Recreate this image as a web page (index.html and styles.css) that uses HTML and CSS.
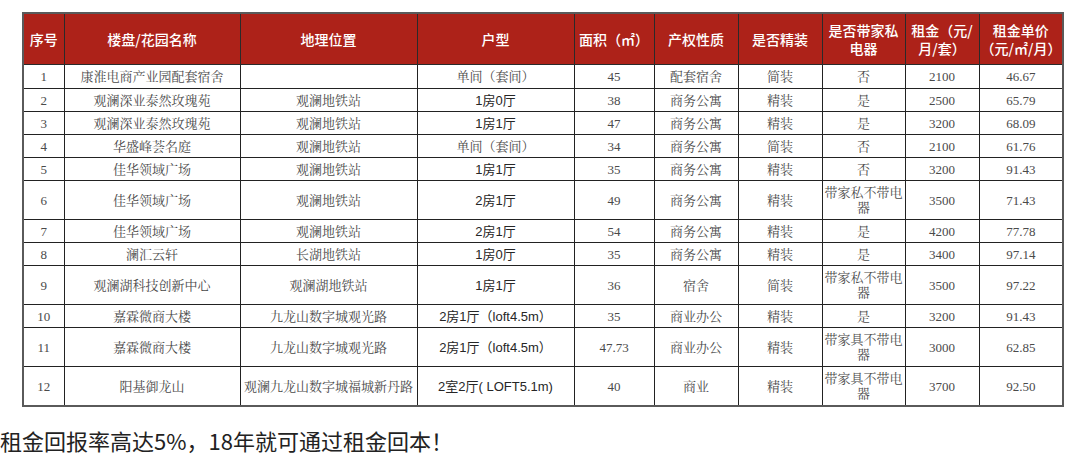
FILE: index.html
```html
<!DOCTYPE html>
<html lang="zh-CN">
<head>
<meta charset="utf-8">
<title>租金表</title>
<link rel="stylesheet" href="styles.css">
</head>
<body>
<div class="page">
  <table class="rent">
    <colgroup>
      <col class="c1"><col class="c2"><col class="c3"><col class="c4"><col class="c5">
      <col class="c6"><col class="c7"><col class="c8"><col class="c9"><col class="c10">
    </colgroup>
    <thead>
      <tr>
        <th>序号</th><th>楼盘/花园名称</th><th>地理位置</th><th>户型</th><th>面积（㎡）</th>
        <th>产权性质</th><th>是否精装</th><th>是否带家私<br>电器</th><th>租金（元/<br>月/套）</th><th>租金单价<br>（元/㎡/月）</th>
      </tr>
    </thead>
    <tbody>
      <tr class="r1"><td>1</td><td>康淮电商产业园配套宿舍</td><td></td><td>单间（套间）</td><td>45</td><td>配套宿舍</td><td>简装</td><td>否</td><td>2100</td><td>46.67</td></tr>
      <tr class="rs"><td>2</td><td>观澜深业泰然玫瑰苑</td><td>观澜地铁站</td><td class="sans">1房0厅</td><td>38</td><td>商务公寓</td><td>精装</td><td>是</td><td>2500</td><td>65.79</td></tr>
      <tr class="rs"><td>3</td><td>观澜深业泰然玫瑰苑</td><td>观澜地铁站</td><td class="sans">1房1厅</td><td>47</td><td>商务公寓</td><td>精装</td><td>是</td><td>3200</td><td>68.09</td></tr>
      <tr class="rs"><td>4</td><td>华盛峰荟名庭</td><td>观澜地铁站</td><td>单间（套间）</td><td>34</td><td>商务公寓</td><td>简装</td><td>否</td><td>2100</td><td>61.76</td></tr>
      <tr class="rs"><td>5</td><td>佳华领域广场</td><td>观澜地铁站</td><td class="sans">1房1厅</td><td>35</td><td>商务公寓</td><td>精装</td><td>否</td><td>3200</td><td>91.43</td></tr>
      <tr class="rd"><td>6</td><td>佳华领域广场</td><td>观澜地铁站</td><td class="sans">2房1厅</td><td>49</td><td>商务公寓</td><td>精装</td><td class="wrap">带家私不带电器</td><td>3500</td><td>71.43</td></tr>
      <tr class="rs"><td>7</td><td>佳华领域广场</td><td>观澜地铁站</td><td class="sans">2房1厅</td><td>54</td><td>商务公寓</td><td>精装</td><td>是</td><td>4200</td><td>77.78</td></tr>
      <tr class="rs"><td>8</td><td>澜汇云轩</td><td>长湖地铁站</td><td class="sans">1房0厅</td><td>35</td><td>商务公寓</td><td>精装</td><td>是</td><td>3400</td><td>97.14</td></tr>
      <tr class="rd"><td>9</td><td>观澜湖科技创新中心</td><td>观澜湖地铁站</td><td class="sans">1房1厅</td><td>36</td><td>宿舍</td><td>简装</td><td class="wrap">带家私不带电器</td><td>3500</td><td>97.22</td></tr>
      <tr class="rs"><td>10</td><td>嘉霖微商大楼</td><td>九龙山数字城观光路</td><td class="sans">2房1厅（loft4.5m）</td><td>35</td><td>商业办公</td><td>精装</td><td>是</td><td>3200</td><td>91.43</td></tr>
      <tr class="rd"><td>11</td><td>嘉霖微商大楼</td><td>九龙山数字城观光路</td><td class="sans">2房1厅（loft4.5m）</td><td>47.73</td><td>商业办公</td><td>精装</td><td class="wrap">带家具不带电器</td><td>3000</td><td>62.85</td></tr>
      <tr class="rd"><td>12</td><td>阳基御龙山</td><td>观澜九龙山数字城福城新丹路</td><td class="sans">2室2厅( LOFT5.1m)</td><td>40</td><td>商业</td><td>精装</td><td class="wrap">带家具不带电器</td><td>3700</td><td>92.50</td></tr>
    </tbody>
  </table>
  <p class="note">租金回报率高达5%，18年就可通过租金回本！</p>
</div>
</body>
</html>
```

FILE: styles.css
```css
html, body {
  margin: 0;
  padding: 0;
  background: #ffffff;
}

.page {
  padding: 12px 0 0 0;
}

.rent {
  margin-left: 22px;
  width: 1040px;
  table-layout: fixed;
  border-collapse: collapse;
  border: 2px solid #5a5a5a;
}

.c1 { width: 41px; }
.c2 { width: 176px; }
.c3 { width: 177px; }
.c4 { width: 157px; }
.c5 { width: 80px; }
.c6 { width: 84px; }
.c7 { width: 84px; }
.c8 { width: 83px; }
.c9 { width: 74px; }
.c10 { width: 84px; }

.rent th {
  background: #ad2219;
  color: #ffffff;
  height: 50px;
  padding: 0 1px;
  font-family: "Noto Sans CJK SC", sans-serif;
  font-weight: 500;
  font-size: 14px;
  line-height: 18px;
  text-align: center;
  vertical-align: middle;
  border: 1px solid #2a2a2a;
}

.rent td {
  padding: 0 2px;
  border: 1px solid #222222;
  text-align: center;
  vertical-align: middle;
  font-family: "Liberation Serif", "Noto Serif CJK SC", "Noto Sans CJK SC", serif;
  font-size: 13px;
  line-height: 15px;
  color: #4a4a4a;
  white-space: nowrap;
}

.rent td.wrap {
  white-space: normal;
  padding: 0;
}

.rent td.sans {
  font-family: "Liberation Sans", "Noto Sans CJK SC", sans-serif;
  color: #262626;
}

.r1 td { height: 23px; }
.rs td { height: 22px; }
.rd td { height: 38px; }

.note {
  margin: 19px 0 0 0;
  font-family: "Noto Sans CJK SC", sans-serif;
  font-size: 22px;
  line-height: 28px;
  color: #222222;
}
```
